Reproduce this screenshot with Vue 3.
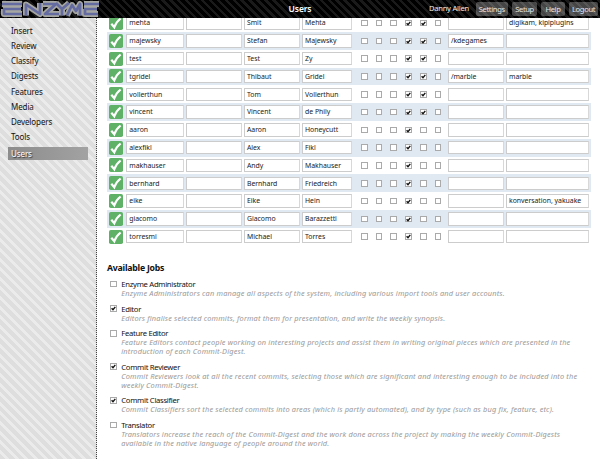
<script setup>
const nav = ['Insert', 'Review', 'Classify', 'Digests', 'Features', 'Media', 'Developers', 'Tools', 'Users']
const actions = ['Settings', 'Setup', 'Help', 'Logout']
const users = [
  ['mehta', 'Smit', 'Mehta', 2, '', 'digikam, kipiplugins'],
  ['majewsky', 'Stefan', 'Majewsky', 2, '/kdegames', ''],
  ['test', 'Test', 'Zy', 2, '', ''],
  ['tgridel', 'Thibaut', 'Gridel', 2, '/marble', 'marble'],
  ['vollerthun', 'Tom', 'Vollerthun', 2, '', ''],
  ['vincent', 'Vincent', 'de Phily', 2, '', ''],
  ['aaron', 'Aaron', 'Honeycutt', 1, '', ''],
  ['alexfikl', 'Alex', 'Fikl', 1, '', ''],
  ['makhauser', 'Andy', 'Makhauser', 1, '', ''],
  ['bernhard', 'Bernhard', 'Friedreich', 1, '', ''],
  ['eike', 'Eike', 'Hein', 1, '', 'konversation, yakuake'],
  ['giacomo', 'Giacomo', 'Barazzetti', 1, '', ''],
  ['torresmi', 'Michael', 'Torres', 1, '', '']
]
const isOn = (u, n) => n === 4 || (n === 5 && u[3] === 2)
const jobs = [
  { name: 'Enzyme Administrator', on: false, lines: ['Enzyme Administrators can manage all aspects of the system, including various import tools and user accounts.'] },
  { name: 'Editor', on: true, lines: ['Editors finalise selected commits, format them for presentation, and write the weekly synopsis.'] },
  { name: 'Feature Editor', on: false, lines: ['Feature Editors contact people working on interesting projects and assist them in writing original pieces which are presented in the', 'introduction of each Commit-Digest.'] },
  { name: 'Commit Reviewer', on: true, lines: ['Commit Reviewers look at all the recent commits, selecting those which are significant and interesting enough to be included into the', 'weekly Commit-Digest.'] },
  { name: 'Commit Classifier', on: true, lines: ['Commit Classifiers sort the selected commits into areas (which is partly automated), and by type (such as bug fix, feature, etc).'] },
  { name: 'Translator', on: false, lines: ['Translators increase the reach of the Commit-Digest and the work done across the project by making the weekly Commit-Digests', 'available in the native language of people around the world.'] }
]
</script>

<template>
  <div class="page">
    <header class="top">
      <svg class="logo" viewBox="0 0 104 18" aria-label="Enzyme">
        <g fill="none" stroke-linejoin="round">
          <g v-for="layer in ['halo', 'ink']" :key="layer" :class="layer">
            <path d="M2 4H22M3 9H21M4 9V14H22" />
            <path d="M26 15.5V4.5L40 14V3" />
            <path d="M43 4H56L45 14H59" />
            <path d="M56 3L62 9L69 3M62 9V15.5" />
            <path d="M67 15.5L72 5L76 11L80 4V15.5" />
            <path d="M84 4H99M84 9H97M85 9V14H98" />
          </g>
        </g>
      </svg>
      <h1>Users</h1>
      <div class="account">
        <span class="who">Danny Allen</span>
        <button v-for="a in actions" :key="a" :class="a.toLowerCase()">{{ a }}</button>
      </div>
    </header>
    <div class="body">
      <nav class="side">
        <a v-for="n in nav" :key="n" :class="{ active: n === 'Users' }">{{ n }}</a>
      </nav>
      <main>
        <div class="table">
          <div v-for="u in users" :key="u[0]" class="row">
            <svg class="tick" viewBox="0 0 14 14">
              <rect width="14" height="14" rx="1.8" />
              <path d="M2.3 7.7L5.3 11.2C6.5 7.7 8.7 4.8 11.6 2.5" />
            </svg>
            <span class="field">{{ u[0] }}</span>
            <span class="field"></span>
            <span class="field">{{ u[1] }}</span>
            <span class="field">{{ u[2] }}</span>
            <div class="perms">
              <span v-for="n in 6" :key="n" class="box">
                <svg v-if="isOn(u, n)" viewBox="0 0 7 7"><path d="M1.6 3.2L3 4.7L5.3 1.9" /></svg>
              </span>
            </div>
            <span class="field">{{ u[4] }}</span>
            <span class="field">{{ u[5] }}</span>
          </div>
        </div>
        <h2>Available Jobs</h2>
        <section v-for="j in jobs" :key="j.name" class="job">
          <span class="box">
            <svg v-if="j.on" viewBox="0 0 7 7"><path d="M1.6 3.2L3 4.7L5.3 1.9" /></svg>
          </span>
          <div>
            <h3>{{ j.name }}</h3>
            <p v-for="l in j.lines" :key="l">{{ l }}</p>
          </div>
        </section>
      </main>
    </div>
  </div>
</template>

<style>
body { margin: 0; overflow: hidden; }
</style>

<style scoped>
* { box-sizing: border-box; }
.page { width: 600px; height: 459px; overflow: hidden; background: #fff; font-family: "Noto Sans", "Open Sans", sans-serif; color: #111; }
.top { position: relative; z-index: 1; height: 17.6px; display: grid; grid-template-columns: 200px 200px 200px; align-items: start; background: repeating-linear-gradient(45deg, #000 0 3.2px, #1a1a1a 3.2px 5.6px); }
.logo { width: 104px; height: 18px; display: block; }
.halo { stroke: #a6a6a2; stroke-width: 6; }
.ink { stroke: #636ba0; stroke-width: 2.7; }
h1 { margin: 0; text-align: center; color: #fff; font-size: 8.5px; line-height: 17px; font-weight: 600; letter-spacing: -.1px; }
.account { display: flex; align-items: flex-start; justify-content: flex-end; gap: 4.2px; padding: 2px 1.8px 0 0; white-space: nowrap; }
.who { color: #eee; font-size: 7.6px; letter-spacing: -.25px; margin-right: 2.4px; line-height: 12px; }
button { height: 14px; margin: 0; padding: 0; border: 0; border-radius: 2px; background: rgba(255, 255, 255, .27); color: #e5e5e5; font: 7.6px/13px "Noto Sans", sans-serif; letter-spacing: -.35px; text-align: center; }
.settings { width: 32.3px; }
.setup { width: 25px; }
.help { width: 23.5px; }
.logout { width: 29.3px; }
.body { display: flex; height: 441.4px; }
.side { width: 97px; flex: none; padding: 6px 8px; border-right: 1px dotted #444; background: repeating-linear-gradient(45deg, #dedede 0 4px, #ebebeb 4px 6.8px); display: flex; flex-direction: column; }
.side a { height: 15.25px; padding-left: 3px; font-size: 8px; letter-spacing: -.1px; line-height: 14.4px; color: #111; }
.side a.active { height: 13px; margin-top: 1.1px; line-height: 13px; color: #fff; text-shadow: 1px 1px 1px #333; background: linear-gradient(90deg, #8c8c8c, #a2a2a2); }
main { flex: 1; min-width: 0; padding: 0 9px 0 10.3px; }
.table { margin-top: -3.4px; }
.row { height: 17.8px; display: grid; grid-template-columns: 15.7px 57.4px 56.1px 56px 49.5px 92.2px 56px 83px; column-gap: 2.1px; align-items: center; padding: 0 0 0 1.4px; }
.row:nth-child(even) { background: #e0e8f2; }
.tick { width: 14px; height: 14px; display: block; }
.tick rect { fill: #5fb168; }
.tick path { fill: none; stroke: #fff; stroke-width: 2.2; }
.field { height: 13.4px; border: 1px solid #ccc; border-right-color: #d8d8d8; background: #fff; padding-left: 1.8px; font-size: 6.9px; letter-spacing: -.02px; line-height: 11.4px; white-space: nowrap; overflow: hidden; color: #222; }
.perms { display: flex; gap: 8.1px; padding-left: 7px; }
.box { flex: none; width: 6.7px; height: 6.7px; border: 1px solid #aaa; background: #fff; display: block; }
.box svg { display: block; width: 7px; height: 7px; margin: -1px; overflow: visible; }
.box path { fill: none; stroke: #111; stroke-width: 1.4; }
h2 { margin: 15.2px 0 5.2px -.3px; font-size: 8.7px; letter-spacing: -.22px; line-height: 14px; font-weight: 700; }
.job { display: flex; gap: 4.3px; padding-left: 3px; margin-bottom: 6.7px; }
.job .box { margin-top: .8px; }
h3 { margin: 0; font-size: 7.7px; letter-spacing: -.3px; line-height: 9px; font-weight: 400; }
.job p { margin: 0; font-size: 7.4px; letter-spacing: .165px; line-height: 8.9px; font-style: italic; color: #999; white-space: nowrap; }
</style>
